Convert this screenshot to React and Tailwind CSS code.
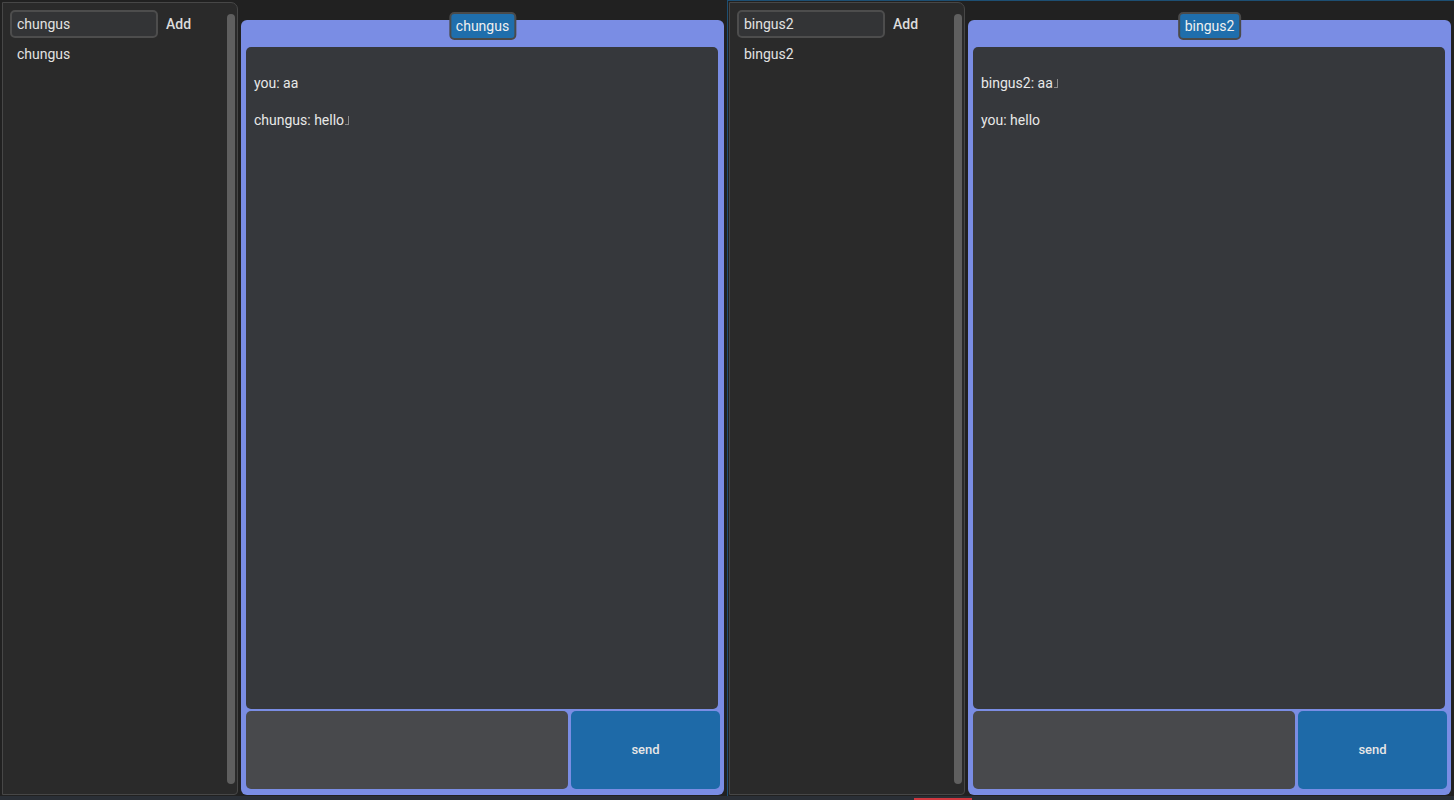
import React from "react";

function Half({ name, messages, focused }) {
  return (
    <div
      className={
        "flex h-[796px] w-[727px] shrink-0 pr-[3px] " +
        (focused ? "border-l border-t border-[#1d4f73] pl-[1px]" : "pl-[2px] pt-[1px]")
      }
    >
      {/* sidebar */}
      <div className="relative mt-[1px] flex h-[793px] w-[236px] shrink-0 flex-col rounded-tr-[7px] rounded-br-[4px] border border-[#474747] bg-[#2a2a2a]">
        <div className="flex items-center pl-[7px] pt-[7px]">
          <div className="flex h-[28px] w-[148px] items-center rounded-[5px] border-2 border-[#4d4d4d] bg-[#333436] px-[5px] text-[14px] text-[#e2e2e2]">
            {name}
          </div>
          <span className="ml-[8px] text-[14px] font-medium text-[#dcdcdc]">Add</span>
        </div>
        <div className="pl-[14px] pt-[6px] text-[14px] text-[#e2e2e2]">{name}</div>
        <div className="absolute right-[2px] top-[11px] h-[770px] w-[8px] rounded-full bg-[#5f5f5f]" />
      </div>
      {/* chat */}
      <div className="relative ml-[3px] mt-[19px] flex h-[775px] w-[483px] shrink-0 flex-col rounded-[6px] bg-[#7a8de4] pl-[5px] pr-[4px] pt-[27px] pb-[5px]">
        <div className="absolute left-1/2 top-[-8px] flex h-[28px] -translate-x-1/2 items-center rounded-[5px] border-2 border-[#4a4a4a] bg-[#1f6eac] px-[5px] text-[14px] text-[#f0f0f0]">
          {name}
        </div>
        <div className="mr-[2px] flex h-[662px] flex-col gap-[17px] rounded-[5px] bg-[#36383c] pl-[8px] pt-[26px] text-[14px] text-[#e8e8e8]">
          {messages.map((m, i) => (
            <div key={i} className="flex h-[20px] items-center">
              {m.text}
              {m.mark && (
                <span className="ml-[1px] inline-block h-[9px] w-[4px] border-b border-r border-[#8a8a8a]" />
              )}
            </div>
          ))}
        </div>
        <div className="mt-[2px] flex h-[78px] gap-[3px]">
          <div className="h-full w-[322px] rounded-[5px] bg-[#48494c]" />
          <div className="flex h-full flex-1 items-center justify-center rounded-[5px] bg-[#1e6aa8] text-[13px] font-medium text-[#e6e6e6]">
            send
          </div>
        </div>
      </div>
    </div>
  );
}

export default function App() {
  return (
    <div
      className="relative flex h-[800px] w-[1454px] flex-col overflow-hidden bg-[#212121]"
      style={{ fontFamily: "Roboto, 'Noto Sans', sans-serif" }}
    >
      <div className="flex">
        <Half
          name="chungus"
          messages={[{ text: "you: aa" }, { text: "chungus: hello", mark: true }]}
        />
        <Half
          name="bingus2"
          focused
          messages={[{ text: "bingus2: aa", mark: true }, { text: "you: hello" }]}
        />
      </div>
      <div className="relative h-[4px] w-full bg-[#2a2f36]">
        <div className="absolute bottom-0 left-[914px] h-[2px] w-[58px] bg-[#d0383f]" />
      </div>
    </div>
  );
}
